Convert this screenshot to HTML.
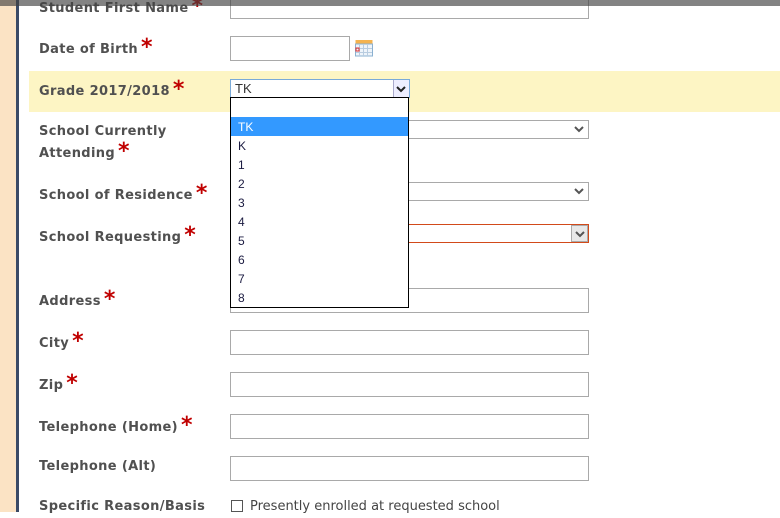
<!DOCTYPE html>
<html><head><meta charset="utf-8"><style>
*{margin:0;padding:0;box-sizing:border-box}
body{width:780px;height:512px;overflow:hidden;background:#fff;position:relative;font-family:"DejaVu Sans","Liberation Sans",sans-serif}
.a{position:absolute}
.lbl{position:absolute;left:39px;font-weight:bold;font-size:13px;letter-spacing:0.35px;color:#505050;line-height:22px;white-space:nowrap;margin-top:2px}
.st{color:#c00000;font-size:22px;font-weight:bold;position:relative;top:1px;margin-left:3px;line-height:10px;letter-spacing:0}
.inp{position:absolute;left:230px;width:359px;height:25px;border:1px solid #a9a9a9;background:#fff}
.sel{position:absolute;left:230px;width:359px;height:19px;border:1px solid #a9a9a9;background:#fff}
.chev{position:absolute;right:4px;top:3px;width:10px;height:10px}
.dd{position:absolute;left:230px;top:97px;width:179px;height:211px;border:1px solid #000;background:#fff;font-family:"Liberation Sans",sans-serif;font-size:12px;color:#1a1a40}
.dd div{height:19px;line-height:20px;padding-left:7px}
</style></head><body>
<div class="a" style="left:0;top:0;width:16px;height:512px;background:#fbe3c4"></div>
<div class="a" style="left:16px;top:0;width:3px;height:512px;background:#3a4a66"></div>
<div class="a" style="left:29px;top:71px;width:751px;height:41px;background:#fdf5c4"></div>

<div class="lbl" style="top:-4px">Student First Name<span class="st">*</span></div>
<div class="inp" style="top:-6px;height:25px"></div>

<div class="lbl" style="top:37px">Date of Birth<span class="st">*</span></div>
<div class="inp" style="top:36px;width:120px"></div>
<svg class="a" style="left:355px;top:39px" width="18" height="18" viewBox="0 0 18 18"><rect x="0.5" y="1" width="17" height="4" fill="#f4b350"/><rect x="0.5" y="5" width="17" height="12" fill="#eef4fa" stroke="#8ab0d0"/><g stroke="#b8cce0"><line x1="4.5" y1="5" x2="4.5" y2="17"/><line x1="8.5" y1="5" x2="8.5" y2="17"/><line x1="12.5" y1="5" x2="12.5" y2="17"/><line x1="1" y1="9.5" x2="17" y2="9.5"/><line x1="1" y1="13.5" x2="17" y2="13.5"/></g><rect x="1" y="9" width="3" height="3" fill="none" stroke="#e03030"/></svg>

<div class="lbl" style="top:79px">Grade 2017/2018<span class="st">*</span></div>
<div class="sel" style="top:79px;width:180px;border-color:#7aaad8;font-family:'Liberation Sans',sans-serif;font-size:13px;color:#333;line-height:17px;padding-left:4px">TK
<div class="a" style="right:0;top:0;width:16px;height:17px;border-left:1px solid #aac;background:#eef"><svg class="chev" style="right:3px;top:4px" viewBox="0 0 10 10"><path d="M1 3 L5 7 L9 3" stroke="#222" stroke-width="2" fill="none"/></svg></div></div>

<div class="lbl" style="top:119px;line-height:22px">School Currently<br>Attending<span class="st">*</span></div>
<div class="sel" style="top:120px"><svg class="chev" viewBox="0 0 10 10"><path d="M1 3 L5 7 L9 3" stroke="#555" stroke-width="2" fill="none"/></svg></div>

<div class="lbl" style="top:183px">School of Residence<span class="st">*</span></div>
<div class="sel" style="top:182px"><svg class="chev" viewBox="0 0 10 10"><path d="M1 3 L5 7 L9 3" stroke="#555" stroke-width="2" fill="none"/></svg></div>

<div class="lbl" style="top:225px">School Requesting<span class="st">*</span></div>
<div class="sel" style="top:224px;border-color:#d24a1a"><div class="a" style="right:0;top:0;width:17px;height:17px;border:1px solid #aaa;background:#e8e8e8"><svg class="chev" style="right:2px;top:3px" viewBox="0 0 10 10"><path d="M1 3 L5 7 L9 3" stroke="#555" stroke-width="2" fill="none"/></svg></div></div>

<div class="lbl" style="top:289px">Address<span class="st">*</span></div>
<div class="inp" style="top:288px"></div>
<div class="lbl" style="top:331px">City<span class="st">*</span></div>
<div class="inp" style="top:330px"></div>
<div class="lbl" style="top:373px">Zip<span class="st">*</span></div>
<div class="inp" style="top:372px"></div>
<div class="lbl" style="top:415px">Telephone (Home)<span class="st">*</span></div>
<div class="inp" style="top:414px"></div>
<div class="lbl" style="top:454px">Telephone (Alt)</div>
<div class="inp" style="top:456px"></div>
<div class="lbl" style="top:494px">Specific Reason/Basis</div>
<div class="a" style="left:231px;top:500px;width:12px;height:12px;border:1px solid #555;background:#fff"></div>
<div class="a" style="left:250px;top:497px;font-family:'DejaVu Sans',sans-serif;font-size:13px;color:#444;line-height:20px;white-space:nowrap">Presently enrolled at requested school</div>

<div class="dd">
<div></div>
<div style="background:#3399ff;color:#fff">TK</div>
<div>K</div><div>1</div><div>2</div><div>3</div><div>4</div><div>5</div><div>6</div><div>7</div><div>8</div>
</div>

<div class="a" style="left:0;top:0;width:780px;height:6px;background:rgba(64,64,64,0.65)"></div>
</body></html>
